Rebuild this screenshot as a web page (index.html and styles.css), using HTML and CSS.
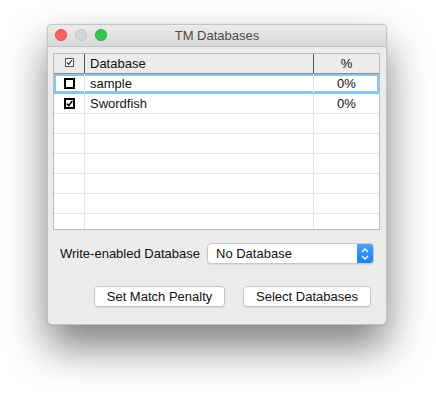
FILE: index.html
```html
<!DOCTYPE html>
<html lang="en">
<head>
    <meta charset="UTF-8">
    <title>TM Databases</title>
    <link rel="stylesheet" href="styles.css">
</head>
<body>
    <div class="window">
        <div class="titlebar">
            <div class="lights">
                <span class="light red"></span>
                <span class="light gray"></span>
                <span class="light green"></span>
            </div>
            <div class="title">TM Databases</div>
        </div>
        <div class="content">
            <div class="table">
                <div class="row head">
                    <div class="cell c1">
                        <svg width="9" height="9" viewBox="0 0 9 9">
                            <rect x="0.5" y="0.5" width="8" height="8" fill="#fff" stroke="#555"/>
                            <path d="M2 4.5 L3.8 6.3 L7 2.2" fill="none" stroke="#333" stroke-width="1.2"/>
                        </svg>
                    </div>
                    <div class="cell c2">Database</div>
                    <div class="cell c3">%</div>
                </div>
                <div class="body">
                    <div class="row sel">
                        <div class="cell c1"><span class="check"></span></div>
                        <div class="cell c2">sample</div>
                        <div class="cell c3">0%</div>
                    </div>
                    <div class="row">
                        <div class="cell c1">
                            <span class="check">
                                <svg width="7" height="7" viewBox="0 0 7 7">
                                    <path d="M0.8 3.6 L2.7 5.6 L6.4 1" fill="none" stroke="#000" stroke-width="1.6"/>
                                </svg>
                            </span>
                        </div>
                        <div class="cell c2">Swordfish</div>
                        <div class="cell c3">0%</div>
                    </div>
                    <div class="row"><div class="cell c1"></div><div class="cell c2"></div><div class="cell c3"></div></div>
                    <div class="row"><div class="cell c1"></div><div class="cell c2"></div><div class="cell c3"></div></div>
                    <div class="row"><div class="cell c1"></div><div class="cell c2"></div><div class="cell c3"></div></div>
                    <div class="row"><div class="cell c1"></div><div class="cell c2"></div><div class="cell c3"></div></div>
                    <div class="row"><div class="cell c1"></div><div class="cell c2"></div><div class="cell c3"></div></div>
                    <div class="row"><div class="cell c1"></div><div class="cell c2"></div><div class="cell c3"></div></div>
                </div>
            </div>

            <div class="field">
                <span class="label">Write-enabled Database</span>
                <div class="popup">
                    <span class="popup_text">No Database</span>
                    <span class="popup_arrow">
                        <svg width="8" height="12" viewBox="0 0 8 12">
                            <path d="M1 4 L4 1 L7 4 M1 8 L4 11 L7 8" fill="none" stroke="#fff" stroke-width="1.3"/>
                        </svg>
                    </span>
                </div>
            </div>

            <div class="buttons">
                <div class="btn btn_penalty">Set Match Penalty</div>
                <div class="btn btn_select">Select Databases</div>
            </div>
        </div>
    </div>
</body>
</html>
```

FILE: styles.css
```css
*{
    margin: 0px;
    padding: 0px;
    box-sizing: border-box;
}
html, body{
    min-height: 400px;
}
body{
    background: #ffffff;
    font-family: "Liberation Sans", Arial, sans-serif;
    font-size: 13px;
    color: #111;
    padding: 24px 0 0 47px;
}
.window{
    width: 340px;
    height: 301px;
    background: #ececec;
    border-radius: 5px;
    border: 1px solid #c4c4c4;
    box-shadow: 0 22px 42px rgba(0, 0, 0, 0.5), 0 0 1px rgba(0, 0, 0, 0.3);
    display: flex;
    flex-direction: column;
    overflow: hidden;
}
.titlebar{
    height: 22px;
    position: relative;
    background: linear-gradient(#ebebeb, #d9d9d9);
    border-bottom: 1px solid #c2c2c2;
    display: flex;
    align-items: center;
    justify-content: center;
}
.lights{
    position: absolute;
    left: 7px;
    top: 4px;
    display: flex;
    gap: 8px;
}
.light{
    width: 12px;
    height: 12px;
    border-radius: 50%;
}
.red{
    background: #fc605b;
    border: 1px solid #de4a44;
}
.gray{
    background: #d6d6d6;
    border: 1px solid #c4c4c4;
}
.green{
    background: #34c84a;
    border: 1px solid #27a938;
}
.title{
    color: #4a4a4a;
    font-size: 13px;
}
.content{
    padding: 6px 6px 0 5px;
    display: flex;
    flex-direction: column;
}
.table{
    height: 177px;
    background: #fff;
    border: 1px solid #bcbcbc;
    overflow: hidden;
}
.row{
    display: flex;
    height: 20px;
    border-bottom: 1px solid #e5e5e5;
}
.row.head{
    height: 20px;
    background: #ececec;
    border-bottom: 1px solid #8c8c8c;
}
.cell{
    display: flex;
    align-items: center;
    height: 100%;
}
.c1{
    width: 31px;
    justify-content: center;
    border-right: 1px solid #e5e5e5;
}
.c2{
    width: 229px;
    padding-left: 5px;
    border-right: 1px solid #e5e5e5;
}
.c3{
    flex: 1;
    justify-content: center;
}
.head .c1, .head .c2{
    border-right: 1px solid #555;
}
.head .c1 svg{
    margin-top: -2px;
}
.row.sel{
    box-shadow: inset 0 0 0 2px #82c7f6;
    border-bottom-color: #82c7f6;
}
.check{
    width: 11px;
    height: 11px;
    border: 2px solid #000;
    background: #fff;
    display: flex;
    align-items: center;
    justify-content: center;
}
.field{
    display: flex;
    align-items: center;
    margin-top: 13px;
    padding-left: 7px;
}
.label{
    width: 147px;
    white-space: nowrap;
}
.popup{
    width: 167px;
    height: 21px;
    display: flex;
    background: #fff;
    border: 1px solid #c8c8c8;
    border-radius: 4px;
    box-shadow: 0 1px 1px rgba(0, 0, 0, 0.08);
    overflow: hidden;
}
.popup_text{
    flex: 1;
    padding-left: 8px;
    display: flex;
    align-items: center;
}
.popup_arrow{
    width: 16px;
    background: linear-gradient(#4aa2fc, #1a80f6);
    display: flex;
    align-items: center;
    justify-content: center;
}
.buttons{
    display: flex;
    margin-top: 22px;
    padding-left: 41px;
    gap: 18px;
}
.btn{
    height: 21px;
    background: #fff;
    border: 1px solid #c6c6c6;
    border-radius: 4px;
    box-shadow: 0 1px 1px rgba(0, 0, 0, 0.08);
    display: flex;
    align-items: center;
    justify-content: center;
    white-space: nowrap;
}
.btn_penalty{
    width: 131px;
}
.btn_select{
    width: 128px;
}
```
